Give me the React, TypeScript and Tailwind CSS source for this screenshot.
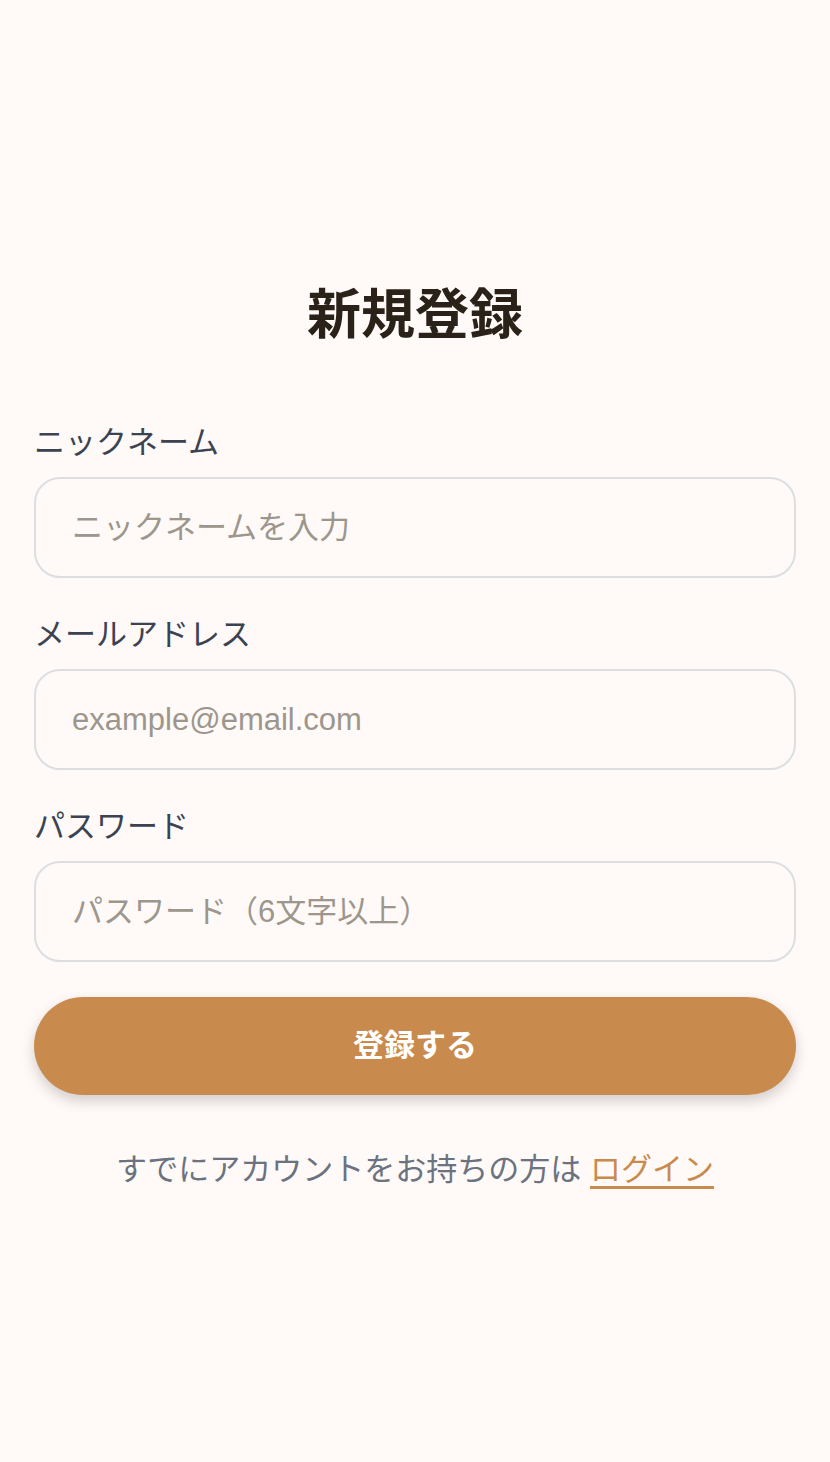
import React, { useState } from 'react'

const font = { fontFamily: '"Liberation Sans", "Noto Sans CJK JP", sans-serif' }

const App = () => {
    const [form, setForm] = useState({ nickname: '', email: '', password: '' })

    const handleInputChange = (e: React.ChangeEvent<HTMLInputElement>) => {
        setForm({ ...form, [e.target.name]: e.target.value })
    }

    const inputClass =
        "block w-full h-[101px] border-2 border-[#dcdee2] rounded-[26px] bg-transparent px-[36px] text-[31px] text-[#2a2118] placeholder:text-[#9c968d] outline-none"

    return (
        <div className="min-h-screen bg-[#fffaf7] font-['Liberation_Sans','Noto_Sans_CJK_JP',sans-serif]" style={font}>
            <div className="px-[34px] pt-[284px] pb-[200px]">
                <h1 className="text-center text-[54px] leading-[62px] font-bold text-[#2a2118]">新規登録</h1>

                <form className="mt-[77px]" onSubmit={(e) => e.preventDefault()}>
                    <label htmlFor="nickname" className="block text-[31px] leading-[40px] text-[#3b4353] mb-[14px]">
                        ニックネーム
                    </label>
                    <input
                        type="text"
                        id="nickname"
                        name="nickname"
                        value={form.nickname}
                        onChange={handleInputChange}
                        placeholder="ニックネームを入力"
                        className={inputClass}
                    />

                    <label htmlFor="email" className="block text-[31px] leading-[40px] text-[#3b4353] mt-[37px] mb-[14px]">
                        メールアドレス
                    </label>
                    <input
                        type="email"
                        id="email"
                        name="email"
                        value={form.email}
                        onChange={handleInputChange}
                        placeholder="example@email.com"
                        className={inputClass}
                    />

                    <label htmlFor="password" className="block text-[31px] leading-[40px] text-[#3b4353] mt-[37px] mb-[14px]">
                        パスワード
                    </label>
                    <input
                        type="password"
                        id="password"
                        name="password"
                        value={form.password}
                        onChange={handleInputChange}
                        placeholder="パスワード（6文字以上）"
                        className={inputClass}
                    />

                    <button
                        type="submit"
                        className="mt-[35px] block w-full h-[98px] rounded-full bg-[#c98b4d] text-white text-[31px] font-bold shadow-[0_6px_14px_rgba(0,0,0,0.18)]"
                    >
                        登録する
                    </button>
                </form>

                <p className="mt-[55px] text-center text-[31px] leading-[40px] text-[#6b7280]">
                    すでにアカウントをお持ちの方は{' '}
                    <a href="#" className="text-[#c98b4d] underline underline-offset-[6px]">ログイン</a>
                </p>
            </div>
        </div>
    )
}

export default App
